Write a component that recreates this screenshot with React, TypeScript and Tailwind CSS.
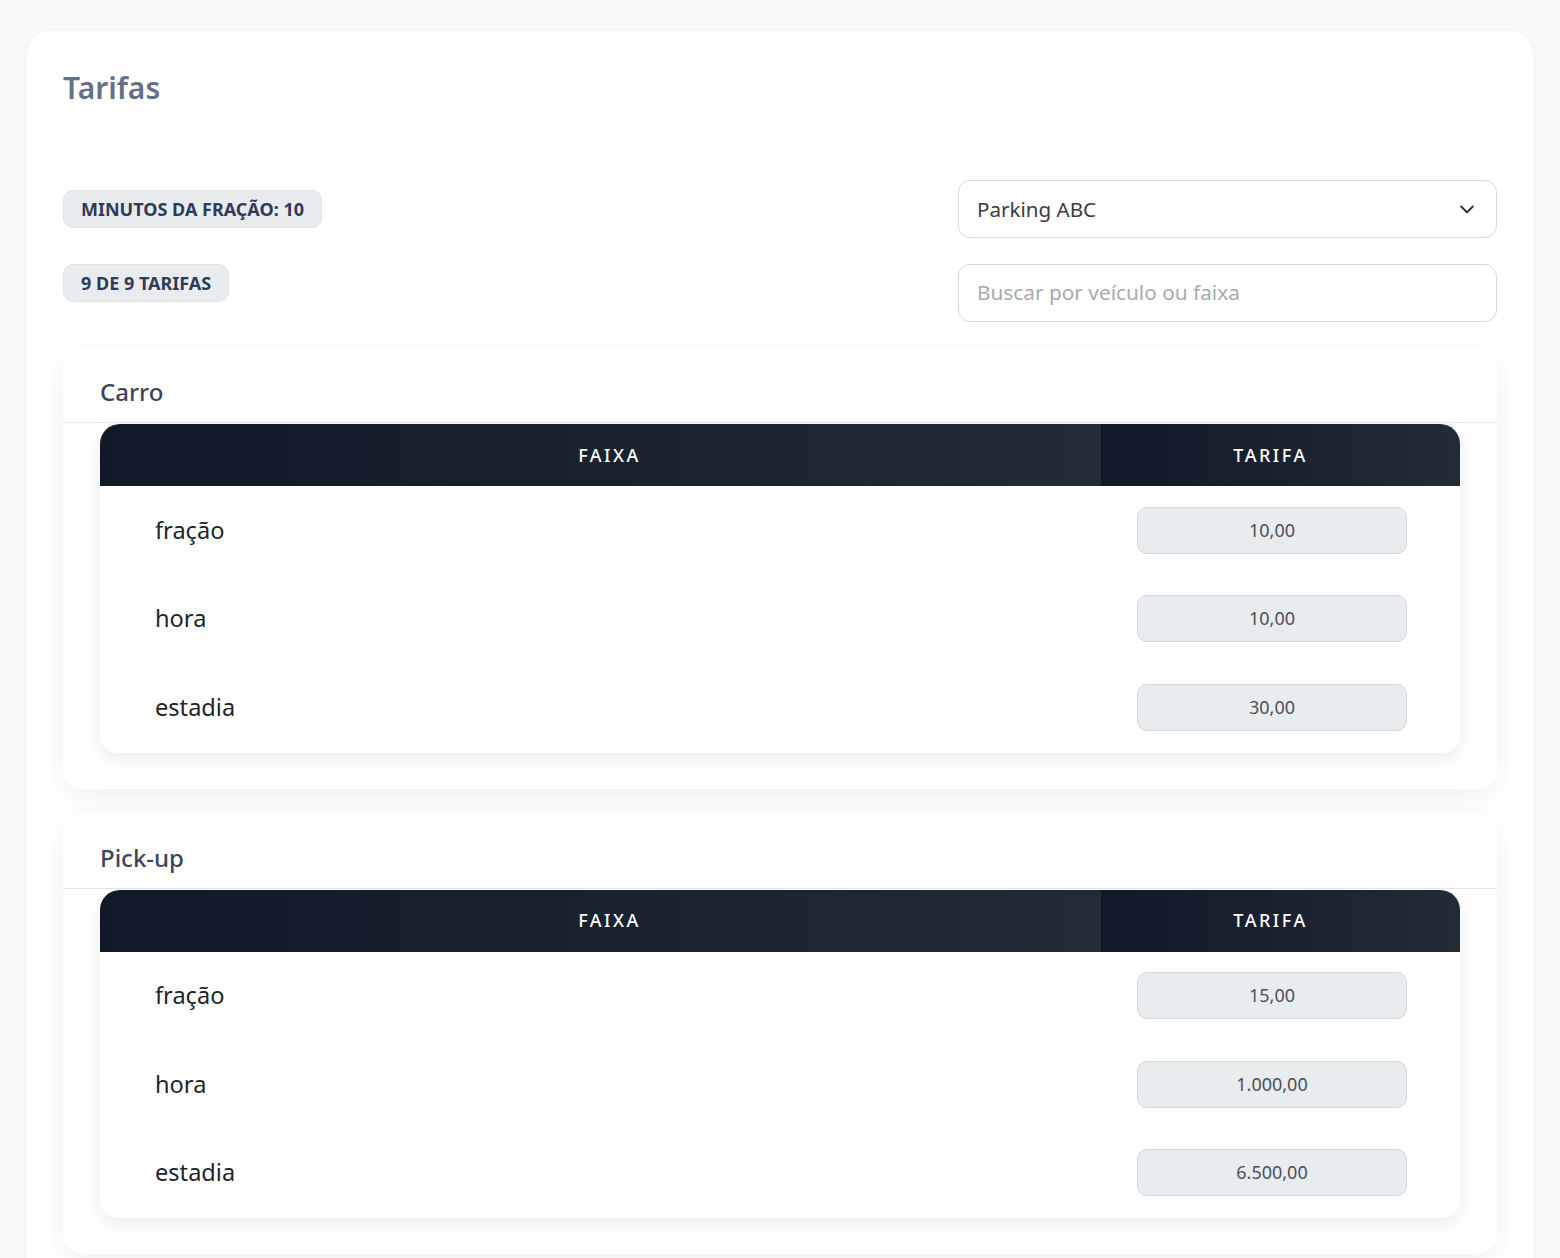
import React from "react";

const font = { fontFamily: '"Noto Sans", "Open Sans", sans-serif' };

type Row = { label: string; value: string };

const sections: { title: string; rows: Row[] }[] = [
  {
    title: "Carro",
    rows: [
      { label: "fração", value: "10,00" },
      { label: "hora", value: "10,00" },
      { label: "estadia", value: "30,00" },
    ],
  },
  {
    title: "Pick-up",
    rows: [
      { label: "fração", value: "15,00" },
      { label: "hora", value: "1.000,00" },
      { label: "estadia", value: "6.500,00" },
    ],
  },
];

function Badge({ children }: { children: React.ReactNode }) {
  return (
    <div className="flex h-[38px] items-center rounded-[10px] border border-[#dee2e6] bg-[#e9ecef] px-[17px] text-[18px] font-bold leading-none text-[#2f3b55]">
      {children}
    </div>
  );
}

function Section({ title, rows }: { title: string; rows: Row[] }) {
  return (
    <div className="rounded-[20px] bg-white pb-[36px] shadow-[0_8px_30px_rgba(0,0,0,0.06)]">
      <div className="border-b border-[#e5e7eb] px-[37px] pb-[14px] pt-[28px] text-[24px] font-medium leading-8 text-[#3a465f]">
        {title}
      </div>
      <div className="mx-[37px] mt-[1px] overflow-hidden rounded-t-[20px] rounded-b-[18px] bg-white shadow-[0_6px_18px_rgba(0,0,0,0.08)]">
        <div className="grid h-[62px] grid-cols-[1001px_1fr]">
          <div className="flex items-center justify-center bg-gradient-to-r from-[#111827] to-[#232b37] pl-[18px] text-[18px] font-medium tracking-[0.14em] text-white">
            FAIXA
          </div>
          <div className="flex items-center justify-center bg-gradient-to-r from-[#111827] to-[#232b37] pr-[20px] text-[18px] font-medium tracking-[0.14em] text-white">
            TARIFA
          </div>
        </div>
        {rows.map((r) => (
          <div key={r.label} className="grid h-[88.5px] grid-cols-[1001px_1fr] items-center">
            <div className="pl-[55px] text-[23.6px] text-[#212529]">{r.label}</div>
            <div className="pl-[36px]">
              <div className="flex h-[47px] w-[270px] items-center justify-center rounded-[10px] border border-[#d3d7dc] bg-[#e9ecef] text-[18px] text-[#495057]">
                {r.value}
              </div>
            </div>
          </div>
        ))}
        <div className="h-[1px]" />
      </div>
    </div>
  );
}

export default function App() {
  return (
    <div style={font} className="min-h-screen bg-[#f8f9fa] px-[27px] pb-10 pt-[31px]">
      <div className="rounded-[24px] bg-white px-[36px] pb-10 pt-[39px] shadow-[0_1px_6px_rgba(0,0,0,0.04)]">
        <h1 className="text-[30px] font-semibold leading-9 text-[#64708a]">Tarifas</h1>

        <div className="mt-[74px] flex items-center justify-between">
          <Badge>MINUTOS DA FRAÇÃO: 10</Badge>
          <div className="flex h-[58px] w-[539px] items-center justify-between rounded-[12px] border border-[#d6d9dd] bg-white pl-[18px] pr-[19px] text-[20.6px] text-[#3a3d42]">
            <span>Parking ABC</span>
            <svg width="20" height="20" viewBox="0 0 24 24" fill="none" stroke="#2b2f36" strokeWidth="2.4" strokeLinecap="round" strokeLinejoin="round">
              <path d="M5 9l7 7 7-7" />
            </svg>
          </div>
        </div>

        <div className="mt-[26px] flex items-start justify-between">
          <Badge>9 DE 9 TARIFAS</Badge>
          <div className="flex h-[58px] w-[539px] items-center rounded-[12px] border border-[#d6d9dd] bg-white pl-[18px] text-[20.8px] text-[#a7abb1]">
            Buscar por veículo ou faixa
          </div>
        </div>

        <div className="mt-[26px] flex flex-col gap-[25px]">
          {sections.map((s) => (
            <Section key={s.title} title={s.title} rows={s.rows} />
          ))}
        </div>
      </div>
    </div>
  );
}
